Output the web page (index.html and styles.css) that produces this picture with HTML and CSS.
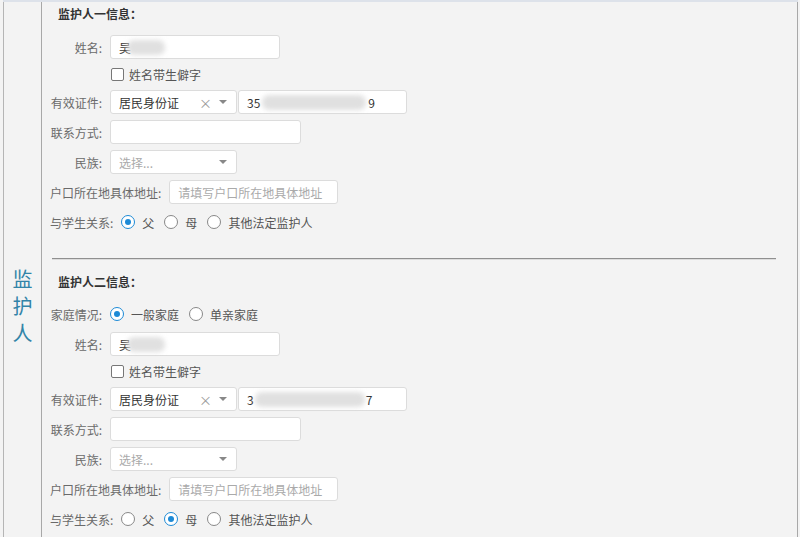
FILE: index.html
```html
<!DOCTYPE html>
<html lang="zh-CN">
<head>
<meta charset="utf-8">
<title>监护人信息</title>
<link rel="stylesheet" href="styles.css">
</head>
<body>
<div class="frame">
  <div class="side"><span class="side-text">监<br>护<br>人</span></div>
  <div class="content">
    <section class="sec sec1">
      <div class="title">监护人一信息：</div>
      <div class="row">
        <span class="lbl">姓名:</span>
        <div class="inp w170"><span class="val">吴</span><span class="blur b-name"></span></div>
      </div>
      <div class="row row-check">
        <span class="lbl"></span>
        <span class="check"></span><span class="check-text">姓名带生僻字</span>
      </div>
      <div class="row">
        <span class="lbl">有效证件:</span>
        <div class="sel w128"><span class="val">居民身份证</span><span class="clear">×</span><span class="caret"></span></div>
        <div class="inp w169 id"><span class="val">35</span><span class="blur b-id"></span><span class="val">9</span></div>
      </div>
      <div class="row">
        <span class="lbl">联系方式:</span>
        <div class="inp w191"></div>
      </div>
      <div class="row">
        <span class="lbl">民族:</span>
        <div class="sel w128"><span class="ph">选择...</span><span class="caret"></span></div>
      </div>
      <div class="row">
        <span class="lbl">户口所在地具体地址:</span>
        <div class="inp w169"><span class="ph">请填写户口所在地具体地址</span></div>
      </div>
      <div class="row">
        <span class="lbl">与学生关系:</span>
        <span class="radio on"></span><span class="rtext">父</span>
        <span class="radio"></span><span class="rtext">母</span>
        <span class="radio"></span><span class="rtext">其他法定监护人</span>
      </div>
    </section>
    <div class="divider"></div>
    <section class="sec sec2">
      <div class="title">监护人二信息：</div>
      <div class="row row-first">
        <span class="lbl">家庭情况:</span>
        <span class="radio on"></span><span class="rtext">一般家庭</span>
        <span class="radio"></span><span class="rtext">单亲家庭</span>
      </div>
      <div class="row row-tight">
        <span class="lbl">姓名:</span>
        <div class="inp w170"><span class="val">吴</span><span class="blur b-name"></span></div>
      </div>
      <div class="row row-check">
        <span class="lbl"></span>
        <span class="check"></span><span class="check-text">姓名带生僻字</span>
      </div>
      <div class="row">
        <span class="lbl">有效证件:</span>
        <div class="sel w128"><span class="val">居民身份证</span><span class="clear">×</span><span class="caret"></span></div>
        <div class="inp w169 id"><span class="val">3</span><span class="blur b-id2"></span><span class="val">7</span></div>
      </div>
      <div class="row">
        <span class="lbl">联系方式:</span>
        <div class="inp w191"></div>
      </div>
      <div class="row">
        <span class="lbl">民族:</span>
        <div class="sel w128"><span class="ph">选择...</span><span class="caret"></span></div>
      </div>
      <div class="row">
        <span class="lbl">户口所在地具体地址:</span>
        <div class="inp w169"><span class="ph">请填写户口所在地具体地址</span></div>
      </div>
      <div class="row">
        <span class="lbl">与学生关系:</span>
        <span class="radio"></span><span class="rtext">父</span>
        <span class="radio on"></span><span class="rtext">母</span>
        <span class="radio"></span><span class="rtext">其他法定监护人</span>
      </div>
    </section>
  </div>
</div>
</body>
</html>
```
FILE: styles.css
```css
html, body {
  margin: 0;
  padding: 0;
  background: #f3f3f3;
}
body {
  width: 800px;
  height: 537px;
  overflow: hidden;
  font-family: "Noto Sans CJK SC", "Noto Sans", sans-serif;
  font-size: 12px;
  color: #555;
}
.frame {
  display: flex;
  border-top: 2px solid #dde2ea;
  margin-left: 3px;
  margin-right: 2px;
  height: 535px;
  overflow: hidden;
}
.side {
  width: 37px;
  border-left: 1px solid #b5b5b5;
  border-right: 1px solid #a8a8a8;
  text-align: center;
  padding-top: 263px;
  flex: none;
}
.side-text {
  font-size: 20px;
  line-height: 27px;
  color: #3284a8;
}
.content {
  flex: 1;
  border-right: 1px solid #a8a8a8;
  padding-left: 8px;
}
.title {
  height: 24px;
  line-height: 24px;
  padding-left: 8px;
  font-weight: bold;
  color: #333;
}
.sec1 .title { margin-bottom: 6px; }
.sec2 .title { margin-bottom: 5px; }
.row {
  display: flex;
  align-items: center;
  height: 30px;
}
.row-check {
  height: 25px;
  align-items: flex-start;
  padding-top: 5px;
  box-sizing: border-box;
}
.lbl {
  min-width: 52px;
  margin-right: 8px;
  text-align: right;
  white-space: nowrap;
  color: #6a6a6a;
}
.inp, .sel {
  box-sizing: border-box;
  height: 24px;
  background: #fff;
  border: 1px solid #dcdcdc;
  border-radius: 3px;
  display: flex;
  align-items: center;
  padding: 0 8px;
  position: relative;
  color: #333;
}
.w170 { width: 170px; }
.w169 { width: 169px; }
.w191 { width: 191px; }
.w128 { width: 127px; }
.id { margin-left: 1px; }
.val { color: #333; }
.ph { color: #aaa; }
.blur {
  display: inline-block;
  height: 15px;
  background: #e0e0e0;
  border-radius: 7px;
  filter: blur(2.5px);
}
.b-name { width: 38px; margin-left: -4px; }
.b-id { width: 104px; margin-left: 2px; margin-right: 2px; }
.b-id2 { width: 110px; margin-left: 1px; margin-right: 1px; }
.sel .val { flex: 1; }
.sel .ph { flex: 1; }
.clear {
  color: #9a9a9a;
  font-size: 13px;
  margin-right: 7px;
}
.caret {
  width: 0;
  height: 0;
  border-left: 4px solid transparent;
  border-right: 4px solid transparent;
  border-top: 4px solid #888;
  margin-right: 1px;
}
.check {
  width: 13px;
  height: 13px;
  box-sizing: border-box;
  border: 1px solid #777;
  border-radius: 2px;
  background: #fff;
  margin-left: 1px;
  margin-top: 1px;
}
.check-text {
  margin-left: 5px;
  color: #555;
  line-height: 15px;
}
.radio {
  width: 14px;
  height: 14px;
  box-sizing: border-box;
  border: 1px solid #888;
  border-radius: 50%;
  background: #fff;
  position: relative;
  flex: none;
}
.radio.on {
  border-color: #1d8ad6;
}
.radio.on::after {
  content: "";
  position: absolute;
  left: 3px;
  top: 3px;
  width: 6px;
  height: 6px;
  border-radius: 50%;
  background: #1d8ad6;
}
.rtext {
  margin-left: 7px;
  margin-right: 10px;
  color: #555;
}
.divider {
  margin: 21px 21px 10px 2px;
  border-top: 1px solid #8f8f8f;
  border-bottom: 1px solid #dcdcdc;
}
```
